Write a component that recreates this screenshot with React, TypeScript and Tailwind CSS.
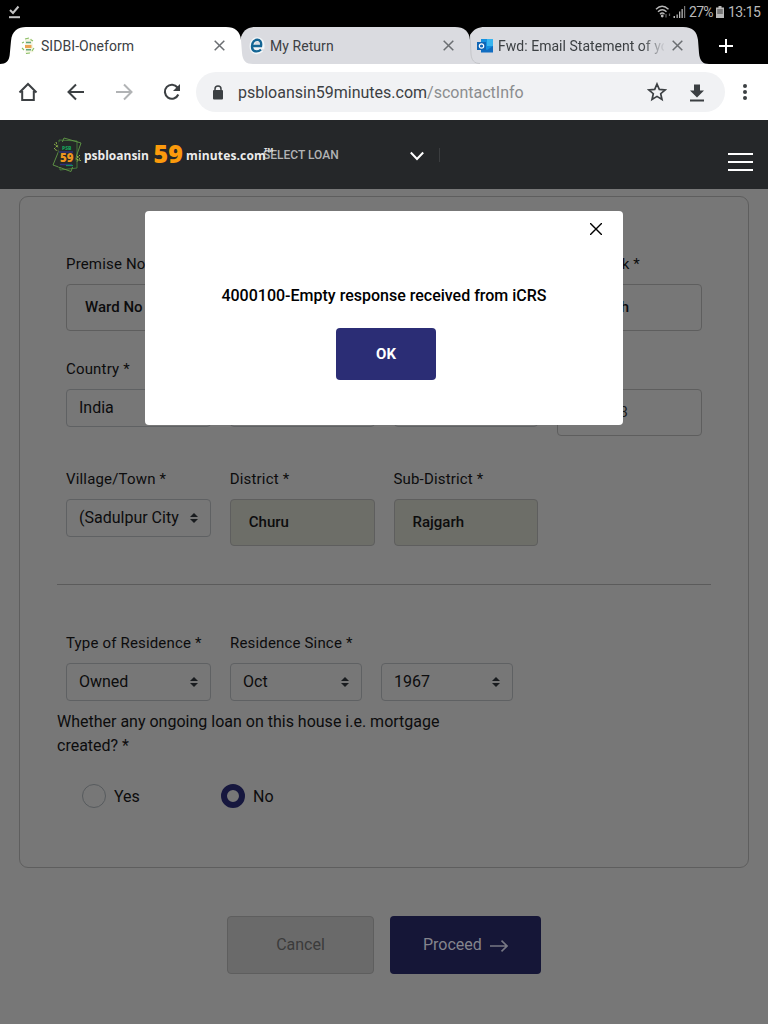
import React from "react";

const ROBOTO = "font-['Roboto','Liberation_Sans',sans-serif]";

function TabShape({ className, slope }: { className: string; slope: string }) {
  return (
    <svg className={"absolute left-0 top-0 h-[37px] w-[256px] overflow-visible " + className} viewBox="0 0 256 37">
      <path d={slope} fill="currentColor" />
    </svg>
  );
}

function CloseIcon() {
  return (
    <svg className="block h-[11px] w-[11px] shrink-0" viewBox="0 0 11 11" fill="none" stroke="#6b6e72" strokeWidth="1.5">
      <path d="M0.7 0.7L10.3 10.3M10.3 0.7L0.7 10.3" />
    </svg>
  );
}

function StatusBar() {
  return (
    <div className="flex h-[27px] items-start bg-black pl-[8px] pr-[7px] text-[#b9b9b9]">
      <svg className="mt-[5px] h-[14px] w-[13px]" viewBox="0 0 13 14" fill="none" stroke="#c4c4c4" strokeWidth="2">
        <path d="M2 5L5 8L10.5 1.5" />
        <path d="M1 12.2H12" />
      </svg>
      <div className="flex-1" />
      <svg className="mt-[5px] h-[14px] w-[17px] shrink-0" viewBox="0 0 17 14" fill="none" stroke="#b9b9b9" strokeWidth="1.4">
        <path d="M1 4.2Q7 -1.6 13.5 4.2" />
        <path d="M3 6.8Q7.2 2.6 11.5 6.8" />
        <path d="M5 9.2Q7.2 7 9.5 9.2" />
        <circle cx="7.2" cy="11" r="0.7" fill="#b9b9b9" />
        <path d="M11 9V12.5M14.5 8.5V11" stroke="#666" strokeWidth="1.2" />
      </svg>
      <svg className="ml-px mt-[6px] h-[12px] w-[13px] shrink-0" viewBox="0 0 13 12" fill="#b9b9b9">
        <path d="M0.5 10H2V12H0.5ZM3.5 8.5H4.8V12H3.5ZM6 5.5H7.3V12H6ZM8.5 3H9.8V12H8.5Z" />
        <path d="M11 0H12.2V12H11Z" fill="#777" />
      </svg>
      <span className="ml-[3px] mt-[3px] w-[24px] shrink-0 whitespace-nowrap text-[14px] leading-[18px] tracking-[-0.7px]">27%</span>
      <svg className="ml-[3px] mt-[6px] h-[12px] w-[8px] shrink-0" viewBox="0 0 8 12">
        <path d="M2.5 0H5.5V1.5H8V12H0V1.5H2.5Z" fill="#b9b9b9" />
        <path d="M1.2 3H6.8V8H1.2Z" fill="#777" />
      </svg>
      <span className="ml-[4px] mt-[3px] w-[33px] shrink-0 whitespace-nowrap text-[14px] leading-[18px] tracking-[-0.5px]">13:15</span>
    </div>
  );
}

function TabStrip() {
  return (
    <div className="flex h-[37px] bg-black text-[14px] text-[#3c4043]">
      <div className="relative z-20 h-[37px] w-[241px]">
        <TabShape
          className="text-white"
          slope="M0 37C6 37 9 34 9.7 28L11 14C11.8 4 18 0 26 0H226C235 0 240 4 241 13L242 26C242.7 34 246 37 253 37Z"
        />
        <div className="relative flex h-[37px] items-center pl-[21px]">
          <svg className="h-[18px] w-[14px]" viewBox="0 0 14 18" fill="none">
            <path d="M4 2.5L11 1.5L12.5 15L4.5 16.5Z" fill="#f4f5df" />
            <path d="M4 2L8 1M9.5 2.5L12 4M1 6L3 5M1 11L3 13M5 16.500L9 16M11 14L13 11" stroke="#88bd62" strokeWidth="1.1" />
            <path d="M5 5.5H10M5 12.8H10" stroke="#61a57d" strokeWidth="1.6" />
            <path d="M4 9.5H10.5" stroke="#eaa452" strokeWidth="3" />
          </svg>
          <span className="ml-[6px] w-[173px] whitespace-nowrap pt-[2px] tracking-[0.06px]">SIDBI-Oneform</span>
          <CloseIcon />
        </div>
      </div>
      <div className="relative z-10 h-[37px] w-[229px]">
        <TabShape
          className="text-[#dadbe0]"
          slope="M0 37V10C3 2 8 0 15 0H214C223 0 228 4 229 13V37Z"
        />
        <div className="relative flex h-[37px] items-center pl-[8px]">
          <svg className="h-[18px] w-[16px]" viewBox="0 0 16 18" fill="none">
            <path d="M2.5 10H13.2C14.5 -0.5 2.8 0.8 2.8 9.2C2.8 15.800 9.5 16 12.5 12.7" stroke="#f3f6f8" strokeWidth="4.6" />
            <path d="M3.500 9H12C13.6 0.500 3.4 0.800 3 9.200C3 15.200 8.500 15.500 12 12.600" stroke="#146594" strokeWidth="2.400" />
          </svg>
          <span className="ml-[5px] w-[173px] whitespace-nowrap pt-[2px] tracking-[0.06px]">My Return</span>
          <CloseIcon />
        </div>
      </div>
      <div className="relative h-[37px] w-[237px]">
        <TabShape
          className="text-[#dadbe0]"
          slope="M0 37V8C4 2 8 0 15 0H213C223 0 227 5 228 13L229 26C229.7 34 233 37 239 37Z"
        />
        <svg className="absolute left-0 top-0 z-20 h-[37px] w-[12px]" viewBox="0 0 12 37" fill="none">
          <path d="M0 8L1 27C1.5 33 4 36.5 10 36.5" stroke="#bfc0c4" strokeWidth="0.8" />
        </svg>
        <div className="relative flex h-[37px] items-center pl-[7px]">
          <svg className="h-[16px] w-[17px] shrink-0" viewBox="0 0 17 16">
            <path d="M4 1H16V14H4Z" fill="#1490df" />
            <path d="M10 1H16V8H10Z" fill="#38b4ef" />
            <path d="M4 8L10 12L16 8V14.5H4Z" fill="#116dc1" />
            <path d="M0 4H9V12H0Z" fill="#0f65b5" />
            <circle cx="4.5" cy="8" r="2.2" fill="none" stroke="white" strokeWidth="1.2" />
          </svg>
          <span className="ml-[4px] w-[166px] shrink-0 overflow-hidden whitespace-nowrap pt-[2px] tracking-[0.03px] [mask-image:linear-gradient(to_right,black_144px,transparent_168px)]">
            Fwd: Email Statement of your
          </span>
          <span className="ml-[8px]"><CloseIcon /></span>
        </div>
      </div>
      <svg className="ml-[12px] mt-[12px] h-[14px] w-[14px]" viewBox="0 0 14 14" stroke="#fff" strokeWidth="2">
        <path d="M0 7H14M7 0V14" />
      </svg>
    </div>
  );
}

function Toolbar() {
  return (
    <div className="flex h-[56px] items-center bg-white pl-[18px] text-[#3c4043]">
      <svg className="h-[20px] w-[20px]" viewBox="0 0 20 20" fill="none" stroke="currentColor" strokeWidth="2">
        <path d="M1.5 10.5L10 2L18.5 10.5M4.2 9V18H15.8V9" />
      </svg>
      <svg className="ml-[29px] h-[18px] w-[18px]" viewBox="0 0 18 18" fill="none" stroke="currentColor" strokeWidth="2">
        <path d="M17 9H2M9 1.5L1.5 9L9 16.5" />
      </svg>
      <svg className="ml-[30px] h-[18px] w-[18px]" viewBox="0 0 18 18" fill="none" stroke="#b1b3b5" strokeWidth="2">
        <path d="M1 9H16M9 1.5L16.5 9L9 16.5" />
      </svg>
      <svg className="ml-[30px] h-[18px] w-[18px]" viewBox="0 0 18 18" fill="none" stroke="currentColor" strokeWidth="2.1">
        <path d="M15.3 11.5A7 7 0 1 1 14.5 4.5" />
        <path d="M17 1V8H10Z" fill="currentColor" stroke="none" />
      </svg>
      <div className="ml-[15px] flex h-[40px] w-[529px] items-center rounded-full bg-[#f1f2f4] pl-[16px]">
        <svg className="mt-px h-[16px] w-[12px]" viewBox="0 0 12 16">
          <path d="M3 6V4A3 3 0 0 1 9 4V6" fill="none" stroke="#3c4043" strokeWidth="1.5" />
          <rect x="1" y="5" width="10" height="9.5" rx="1" fill="#3c4043" />
        </svg>
        <span className="ml-[14px] w-[409px] whitespace-nowrap pt-[2px] text-[16px] leading-[24px]">
          psbloansin59minutes.com<span className="text-[#8b8d8f]">/scontactInfo</span>
        </span>
        <svg className="h-[20px] w-[20px]" viewBox="0 0 20 20" fill="none" stroke="currentColor" strokeWidth="1.7">
          <path d="M10 2L12.3 7.4L18.1 7.9L13.7 11.7L15 17.5L10 14.4L5 17.5L6.3 11.7L1.9 7.9L7.7 7.4Z" />
        </svg>
        <svg className="ml-[23px] mt-[2px] h-[18px] w-[14px]" viewBox="0 0 14 18" fill="currentColor">
          <path d="M4 0.5H10V6.5H14L7 13.5L0 6.5H4ZM0 15.5H14V17.5H0Z" />
        </svg>
      </div>
      <svg className="ml-[18px] h-[18px] w-[4px]" viewBox="0 0 4 18" fill="currentColor">
        <circle cx="2" cy="3" r="2" />
        <circle cx="2" cy="9" r="2" />
        <circle cx="2" cy="15" r="2" />
      </svg>
    </div>
  );
}

function LogoMark() {
  return (
    <svg className="h-[36px] w-[31px] shrink-0" viewBox="0 0 31 36" fill="none">
      <path d="M7 3L25 4L25 31L8 33Z" stroke="#477f3d" strokeWidth="0.9" />
      <path d="M12 1L29 6L19 34.5L1 28Z" stroke="#629b47" strokeWidth="0.9" />
      <rect x="6.5" y="5" width="17" height="25" fill="#242927" />
      <path d="M2 7L5 9L2 12L6 14M4 5L6 11M25 19L28 22L24 25M28 18L24 22L30 24" stroke="#8fb44a" strokeWidth="1" strokeDasharray="2 1" />
      <text x="10" y="12.5" fill="#169d59" fontFamily="Open Sans" fontSize="5" fontWeight="800">PSB</text>
      <path d="M7 15H21M8 27.5H20" stroke="#303078" strokeWidth="1.3" />
      <text x="8" y="24.5" fill="#ee951f" fontFamily="Open Sans" fontSize="11.5" fontWeight="800">59</text>
      <path d="M14 28.5H21" stroke="#158d61" strokeWidth="1.3" />
    </svg>
  );
}

function SiteHeader() {
  return (
    <div className="flex h-[69px] items-start bg-[#252729] pl-[52px]">
      <div className="relative z-10 flex h-[69px] w-[211px] shrink-0 items-start whitespace-nowrap font-['Open_Sans','Liberation_Sans',sans-serif] font-bold text-[#ececec]">
        <div className="mt-[17px]"><LogoMark /></div>
        <span className="ml-px mt-[28px] w-[69.5px] shrink-0 text-[12px] leading-[16px]">psbloansin</span>
        <span className="mt-[20px] w-[32.500px] shrink-0 text-[25px] font-extrabold leading-[27px] text-[#fb9a0c]">59</span>
        <span className="mt-[28px] w-[79px] shrink-0 text-[12px] leading-[16px] tracking-[0.15px]">minutes.com</span>
        <span className="-ml-px mt-[26px] shrink-0 text-[6px] leading-[8px]">TM</span>
      </div>
      <span className="mt-[26px] w-[148px] shrink-0 whitespace-nowrap text-[12px] font-medium leading-[18px] text-[#b2b3b4]">SELECT LOAN</span>
      <svg className="-ml-px mt-[31px] h-[10px] w-[14px]" viewBox="0 0 14 10" fill="none" stroke="#fff" strokeWidth="2">
        <path d="M0.8 1.5L7 8L13.2 1.5" />
      </svg>
      <div className="ml-[15px] mt-[28px] h-[14px] w-px bg-[#3b3d3f]" />
      <div className="flex-1" />
      <div className="mr-[15px] mt-[33px] flex w-[25px] flex-col gap-[6px]">
        <div className="h-[2px] bg-white" />
        <div className="h-[2px] bg-white" />
        <div className="h-[2px] bg-white" />
      </div>
    </div>
  );
}

function Label({ children, look = "" }: { children?: React.ReactNode; look?: string }) {
  return <div className={"h-[30px] whitespace-nowrap text-[15px] leading-[20px] tracking-[0.17px] " + look}>{children}</div>;
}

function TextField({ label, value, look = "pl-[18px]" }: { label?: string; value?: string; look?: string }) {
  return (
    <div className="min-w-0">
      <Label>{label}</Label>
      <div className={"flex h-[47px] items-center whitespace-nowrap rounded-[4px] border border-[#5e5e5e] text-[15px] " + look}>
        {value}
      </div>
    </div>
  );
}

function SelectField({ label, value, width = "" }: { label?: string; value?: string; width?: string }) {
  return (
    <div className={"min-w-0 " + width}>
      <Label>{label}</Label>
      <div className="flex h-[38px] items-center justify-between whitespace-nowrap rounded-[4px] border border-[#5f6163] pl-[12px] pr-[12px] text-[16px]">
        <span>{value}</span>
        <svg className="h-[10px] w-[8px]" viewBox="0 0 8 10" fill="#191c1f">
          <path d="M4 0L8 4H0ZM0 6H8L4 10Z" />
        </svg>
      </div>
    </div>
  );
}

function FormPage() {
  return (
    <div className="flex h-[835px] flex-col bg-[#777777] px-[19px] pt-[7px] text-[#0c0c0d]">
      <div className="h-[672px] rounded-[9px] border border-[#5e5e5e] px-[37px] pt-[57px]">
        <div className="grid w-[645px] grid-cols-4 gap-x-[19px] pl-[9px]">
          <TextField label="Premise No" value="Ward No" look="pl-[18px] font-medium" />
          <TextField />
          <TextField />
          <div className="min-w-0">
            <Label look="pr-[62px] text-right">Landmark *</Label>
            <div className="flex h-[47px] items-center justify-end rounded-[4px] border border-[#5e5e5e] pr-[72px] text-[15px] font-medium">Rajgarh</div>
          </div>
        </div>
        <div className="mt-[28px] grid w-[645px] grid-cols-4 gap-x-[19px] pl-[9px]">
          <SelectField label="Country *" value="India" />
          <SelectField />
          <SelectField />
          <TextField value="331023" look="justify-end pr-[73px] text-[#1b1b1b]" />
        </div>
        <div className="mt-[33px] grid w-[645px] grid-cols-4 gap-x-[19px] pl-[9px]">
          <SelectField label="Village/Town *" value="(Sadulpur City" />
          <TextField label="District *" value="Churu" look="bg-[#6d6e68] pl-[18px] font-medium" />
          <TextField label="Sub-District *" value="Rajgarh" look="bg-[#6d6e68] pl-[18px] font-medium" />
        </div>
        <div className="mt-[38px] h-px w-[654px] bg-[#5b5b5b]" />
        <div className="mt-[48px] flex gap-[19px] pl-[9px]">
          <SelectField label="Type of Residence *" value="Owned" width="w-[145px]" />
          <SelectField label="Residence Since *" value="Oct" width="w-[132px]" />
          <SelectField value="1967" width="w-[132px]" />
        </div>
        <p className="mt-[9px] w-[420px] text-[16px] leading-[24px]">
          Whether any ongoing loan on this house i.e. mortgage created? *
        </p>
        <div className="mt-[26px] flex h-[24px] items-center pl-[25px] text-[16px]">
          <div className="h-[24px] w-[24px] rounded-full border border-[#575b5e]" />
          <span className="ml-[8px] w-[107px] pt-[2px]">Yes</span>
          <div className="h-[24px] w-[24px] rounded-full border-[6px] border-[#16173e]" />
          <span className="ml-[8px] pt-[2px]">No</span>
        </div>
      </div>
      <div className="mt-[48px] flex gap-[16px] pl-[208px] text-[16px]">
        <div className="flex h-[58px] w-[147px] items-center justify-center rounded-[4px] border border-[#5e5e5e] bg-[#6a6a6a] text-[#3b3b3b]">
          Cancel
        </div>
        <div className="flex h-[58px] w-[151px] items-center rounded-[4px] bg-[#151637] pl-[33px] text-[#84858d]">
          <span className="w-[67px]">Proceed</span>
          <svg className="mt-[2px] h-[12px] w-[18px]" viewBox="0 0 18 12" fill="none" stroke="#777884" strokeWidth="1.6">
            <path d="M0 6H17M11.5 0.7L17 6L11.5 11.3" />
          </svg>
        </div>
      </div>
    </div>
  );
}

function ErrorDialog() {
  return (
    <div className="absolute left-[145px] top-[211px] z-30 flex h-[214px] w-[478px] flex-col rounded-[4px] bg-white text-black">
      <div className="flex h-[73px] justify-end pr-[21px] pt-[12px]">
        <svg className="h-[12px] w-[12px]" viewBox="0 0 12 12" stroke="#000" strokeWidth="1.4">
          <path d="M0 0L12 12M12 0L0 12" />
        </svg>
      </div>
      <div className="whitespace-nowrap text-center text-[16px] font-medium leading-[24px]">4000100-Empty response received from iCRS</div>
      <div className="ml-[191px] mt-[20px] flex h-[52px] w-[100px] items-center justify-center rounded-[4px] bg-[#2b2d75] text-[15px] font-bold text-white">OK</div>
    </div>
  );
}

export default function App() {
  return (
    <div className={"relative h-[1024px] w-[768px] overflow-hidden bg-black " + ROBOTO}>
      <StatusBar />
      <TabStrip />
      <Toolbar />
      <SiteHeader />
      <FormPage />
      <ErrorDialog />
    </div>
  );
}
